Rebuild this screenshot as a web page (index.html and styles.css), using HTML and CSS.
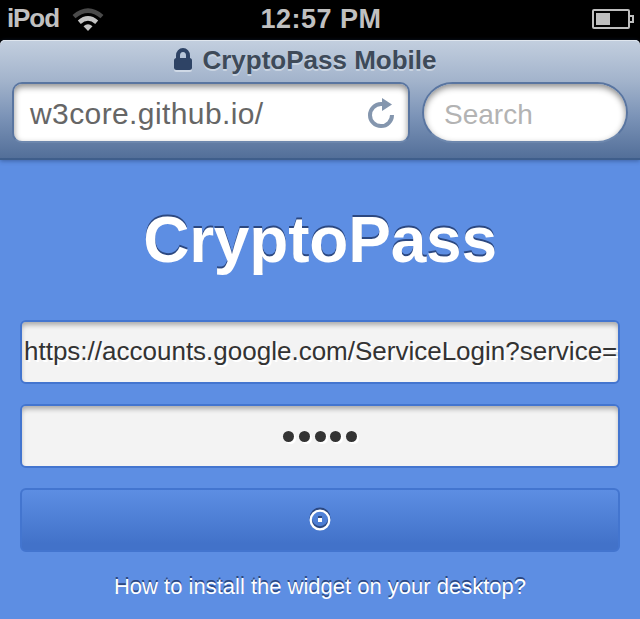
FILE: index.html
```html
<!DOCTYPE html>
<html lang="en">
<head>
<meta charset="utf-8">
<title>CryptoPass Mobile</title>
<link rel="stylesheet" href="styles.css">
</head>
<body>
<div class="status">
  <div class="carrier">
    <span class="device">iPod</span>
    <svg class="wifi" width="32" height="24" viewBox="0 0 32 24">
      <g fill="none" stroke-width="4.500">
        <path d="M2 8.600Q16-3.400 30 8.600" stroke="#4a4a4a"/>
        <path d="M7.300 14.200Q16 6.600 24.700 14.200" stroke="#c4c4c4"/>
      </g>
      <path d="M11.500 18.300Q16 14.300 20.500 18.300L16 23Z" fill="#c4c4c4"/>
    </svg>
  </div>
  <span class="time">12:57 PM</span>
  <svg class="battery" width="42" height="20" viewBox="0 0 42 20">
    <g fill="none" stroke="#bebebe" stroke-width="2">
      <rect x="1" y="1" width="36" height="18" rx="1"/>
      <path d="M38 7h3v6h-3"/>
    </g>
    <path fill="#bebebe" d="M4 4h14v12H4z"/>
  </svg>
</div>
<div class="toolbar-back">
  <header class="toolbar">
    <div class="page-title">
      <svg class="lock" width="18" height="24" viewBox="0 0 18 24">
        <rect y="12" width="18" height="12" rx="2.500" fill="#cfd9e6"/>
        <path d="M4 12V7.500a5 5.500 0 0 1 10 0V12" fill="none" stroke="#2e4365" stroke-width="4"/>
        <rect y="10" width="18" height="12" rx="2.500" fill="#2e4365"/>
      </svg>
      <span>CryptoPass Mobile</span>
    </div>
    <div class="fields">
      <div class="field address">
        <span class="address-text">w3core.github.io/</span>
        <svg class="reload" width="28" height="32" viewBox="0 0 28 32">
          <path d="M15 6.100H14A11 11 0 1 0 25 17" fill="none" stroke="#8496ae" stroke-width="4"/>
          <path d="M15 0L25 6.500L15 13Z" fill="#8496ae"/>
        </svg>
      </div>
      <div class="field search">Search</div>
    </div>
  </header>
</div>
<main class="app">
  <h1 class="brand">CryptoPass</h1>
  <div class="control">https://accounts.google.com/ServiceLogin?service=</div>
  <div class="control secret">
    <i class="dot"></i><i class="dot"></i><i class="dot"></i><i class="dot"></i><i class="dot"></i>
  </div>
  <button class="submit" type="button" aria-label="Generate">
    <svg width="22" height="26" viewBox="0 0 22 26">
      <g fill="none" stroke-width="2.300">
        <circle cx="11" cy="11" r="9.300" stroke="#2c4880"/>
        <circle cx="11" cy="13" r="9.300" stroke="#fff"/>
      </g>
      <path fill="#2c4880" d="M9 9h4v3H9z"/>
      <path fill="#fff" d="M9 11h4v4H9z"/>
    </svg>
  </button>
  <a class="help">How to install the widget on your desktop?</a>
</main>
</body>
</html>
```
FILE: styles.css
```css
* { box-sizing: border-box; }

body {
  margin: 0;
  height: 619px;
  overflow: hidden;
  background: #5d8ee3;
  font-family: "Liberation Sans", Arial, sans-serif;
}

.status {
  display: grid;
  grid-template-columns: 1fr auto 1fr;
  align-items: center;
  height: 40px;
  padding: 0 6px 2px 7px;
  background: #000;
  color: #c0c0c0;
  font-weight: bold;
}

.carrier { display: flex; align-items: center; gap: 13px; }
.device { font-size: 26px; line-height: 36px; padding-bottom: 2px; letter-spacing: -1.1px; }
.wifi { margin-top: 1px; }
.time { font-size: 27px; line-height: 38px; letter-spacing: .5px; padding-left: 1px; }
.battery { justify-self: end; margin-bottom: 2px; align-self: end; margin-bottom: 9px; }

.toolbar-back { background: #000; }

.toolbar {
  height: 120px;
  border-radius: 5px 5px 0 0;
  border-bottom: 2px solid #3f5e8b;
  background: linear-gradient(#c3cfdf, #a2b3cb 35%, #7b93b7 65%, #536f99);
  box-shadow: inset 0 1px #dfe6ee, 0 1px 4px rgba(35, 60, 110, .55);
}

.page-title {
  display: flex;
  justify-content: center;
  gap: 10px;
  height: 42px;
  margin-right: 29px;
  padding-top: 5px;
  color: #3e4a59;
  font-size: 26px;
  font-weight: bold;
  line-height: 30px;
  text-shadow: 0 2px #c9d4e2;
}

.lock { margin-top: 3px; }

.fields { display: flex; gap: 12px; padding: 0 12px; }

.field {
  height: 61px;
  border: 2px solid #5975a0;
  border-bottom-color: #6d87ad;
  background: #fff;
  box-shadow: inset 0 3px 6px rgba(0, 0, 0, .45);
  line-height: 61px;
}

.address {
  display: flex;
  align-items: center;
  justify-content: space-between;
  width: 398px;
  padding: 2px 13px 0 16px;
  border-radius: 10px;
  color: #666;
  font-size: 30px;
}

.address-text { letter-spacing: .4px; }

.search {
  width: 206px;
  padding-left: 20px;
  border-radius: 31px;
  color: #b3b3b3;
  font-size: 28px;
}

.app {
  display: flex;
  flex-direction: column;
  gap: 20px;
  padding: 0 20px;
}

.brand {
  height: 140px;
  margin: 0;
  padding-top: 43px;
  color: #fff;
  font-size: 64px;
  line-height: 74px;
  letter-spacing: -.2px;
  text-align: center;
  text-shadow: 0 -2px #2c4880;
}

.control {
  height: 64px;
  padding-left: 2px;
  border: 2px solid #4375cf;
  border-radius: 6px;
  background: #f3f3f3;
  box-shadow: inset 0 4px 5px -1px rgba(0, 0, 0, .3);
  color: #333;
  font-size: 26px;
  line-height: 58px;
  text-shadow: 2px 2px #fff;
  white-space: nowrap;
  overflow: hidden;
}

.secret {
  display: flex;
  align-items: center;
  justify-content: center;
  gap: 4.700px;
  padding: 0;
}

.dot {
  width: 11px;
  height: 11px;
  border-radius: 50%;
  background: #333;
  box-shadow: 2px 2px #fff;
}

.submit {
  display: flex;
  align-items: center;
  justify-content: center;
  height: 64px;
  padding: 0;
  border: 2px solid #4375cf;
  border-radius: 6px;
  background: linear-gradient(#5d8ee3, #4272c9 90%);
}

.help {
  color: #fff;
  font-size: 22px;
  line-height: 30px;
  text-align: center;
  text-shadow: 0 -2px #2c4880;
}
```
